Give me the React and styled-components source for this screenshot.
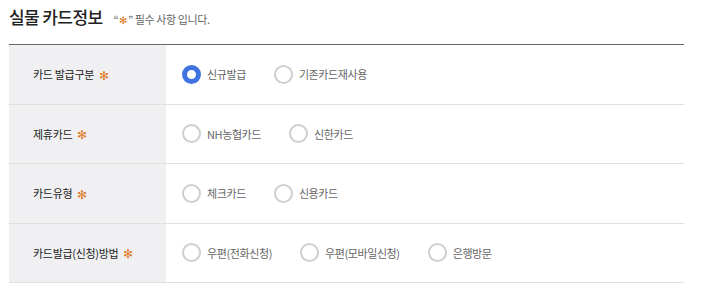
import React from "react";
import styled, { createGlobalStyle } from "styled-components";

const GlobalStyle = createGlobalStyle`
  body {
    margin: 0;
    background: #fff;
    font-family: "Noto Sans CJK KR", "Noto Sans", sans-serif;
  }
`;

const ROWS = [
  { label: "카드 발급구분", options: ["신규발급", "기존카드재사용"], checked: 0 },
  { label: "제휴카드", options: ["NH농협카드", "신한카드"], checked: -1 },
  { label: "카드유형", options: ["체크카드", "신용카드"], checked: -1 },
  {
    label: "카드발급(신청)방법",
    options: ["우편(전화신청)", "우편(모바일신청)", "은행방문"],
    checked: -1,
  },
];

const App = () => {
  return (
    <>
      <GlobalStyle />
      <Wrap>
        <Header>
          <Title>실물 카드정보</Title>
          <Note>
            “<NoteStar>✻</NoteStar>” 필수 사항 입니다.
          </Note>
        </Header>
        <Table>
          {ROWS.map((row) => (
            <Row key={row.label}>
              <Label>
                {row.label}
                <Star>✻</Star>
              </Label>
              <Cell>
                {row.options.map((opt, i) => (
                  <Option key={opt}>
                    <Radio checked={i === row.checked} />
                    <span>{opt}</span>
                  </Option>
                ))}
              </Cell>
            </Row>
          ))}
        </Table>
      </Wrap>
    </>
  );
};

export default App;

const Wrap = styled.div`
  width: 675px;
  padding: 0 0 0 9px;
`;

const Header = styled.div`
  display: flex;
  align-items: baseline;
  height: 44px;
  padding-top: 4px;
  box-sizing: border-box;
`;

const Title = styled.h2`
  margin: 0;
  font-size: 17px;
  font-weight: 500;
  color: #222;
  letter-spacing: -0.6px;
`;

const Note = styled.span`
  margin-left: 11px;
  font-size: 11px;
  color: #666;
  letter-spacing: -0.4px;
`;

const Star = styled.span`
  margin-left: 5px;
  color: #e0761a;
  font-size: 12px;
`;

const NoteStar = styled(Star)`
  margin: 0 1px;
  font-size: 10px;
`;

const Table = styled.div`
  border-top: 1px solid #666;
`;

const Row = styled.div`
  display: flex;
  height: 58.5px;
  border-bottom: 1px solid #e0e0e0;
`;

const Label = styled.div`
  width: 133px;
  flex-shrink: 0;
  padding-left: 24px;
  background: #f0f0f2;
  display: flex;
  align-items: center;
  font-size: 11px;
  color: #222;
  letter-spacing: -0.3px;
  white-space: pre;
`;

const Cell = styled.div`
  flex: 1;
  display: flex;
  align-items: center;
  padding-left: 16px;
  gap: 28px;
`;

const Option = styled.label`
  display: flex;
  align-items: center;
  gap: 6px;
  font-size: 11px;
  color: #666;
  letter-spacing: -0.4px;
`;

const Radio = styled.span`
  width: 19px;
  height: 19px;
  box-sizing: border-box;
  border-radius: 50%;
  border: ${(p) => (p.checked ? "5px solid #3f74e0" : "2px solid #cfcfcf")};
  background: #fff;
`;
